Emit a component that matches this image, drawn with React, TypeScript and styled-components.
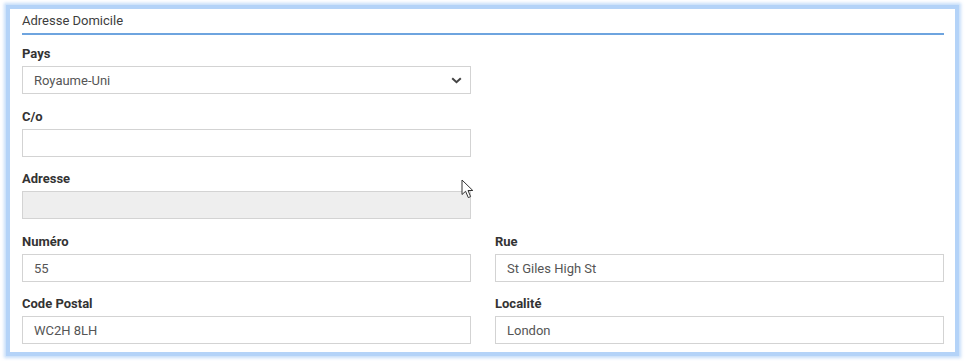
import styled, { createGlobalStyle } from 'styled-components';

const GlobalStyle = createGlobalStyle`
  html, body {
    margin: 0;
    padding: 0;
    background: #ffffff;
    font-family: Roboto, "Liberation Sans", Arial, sans-serif;
  }
`;

const Page = styled.div`
  position: relative;
  width: 967px;
  height: 361px;
  padding: 9px 0 0 10px;
  box-sizing: border-box;
`;

// white card with the light blue glowing frame
const Card = styled.section`
  width: 945px;
  height: 343px;
  box-sizing: border-box;
  background: #ffffff;
  padding: 3px 11px 0 12px;
  box-shadow:
    0 0 0 4px #b4d3f8,
    0 0 3px 6px rgba(172, 206, 246, 0.7);
`;

const Legend = styled.div`
  font-size: 13px;
  line-height: 18px;
  color: #3d3d3d;
  padding-bottom: 3px;
  border-bottom: 2px solid #6ea4df;
  margin-bottom: 11px;
`;

const Fields = styled.div`
  display: grid;
  grid-template-columns: 1fr 1fr;
  column-gap: 24px;
  row-gap: 14.5px;
`;

// full rows hold a single half-width field (Pays, C/o, Adresse)
const Field = styled.div<{ $full?: boolean }>`
  display: flex;
  flex-direction: column;
  gap: 4px;
  grid-column: ${p => (p.$full ? '1 / -1' : 'auto')};
  width: ${p => (p.$full ? 'calc(50% - 12px)' : 'auto')};
`;

const Label = styled.label`
  font-size: 13px;
  font-weight: 700;
  line-height: 16px;
  color: #333333;
`;

const Box = styled.div<{ $disabled?: boolean }>`
  position: relative;
  height: 28px;
  box-sizing: border-box;
  border: 1px solid #d3d3d3;
  background: ${p => (p.$disabled ? '#eeeeee' : '#ffffff')};
  padding: 1px 10px 0 11px;
  display: flex;
  align-items: center;
  font-size: 13px;
  color: #555555;
`;

const Chevron = styled.svg`
  position: absolute;
  right: 8px;
  top: 50%;
  margin-top: -3px;
`;

const Cursor = styled.svg`
  position: absolute;
  left: 461px;
  top: 179px;
`;

type FieldProps = {
  label: string;
  value?: string;
  full?: boolean;
  disabled?: boolean;
  select?: boolean;
};

const FormField = ({ label, value = '', full, disabled, select }: FieldProps) => (
  <Field $full={full}>
    <Label>{label}</Label>
    <Box $disabled={disabled}>
      {value}
      {select && (
        <Chevron width="11" height="7" viewBox="0 0 11 7">
          <path d="M1.2 1.2 L5.5 5.2 L9.8 1.2" fill="none" stroke="#444" strokeWidth="2" />
        </Chevron>
      )}
    </Box>
  </Field>
);

export default function App() {
  return (
    <>
      <GlobalStyle />
      <Page>
        <Card>
          <Legend>Adresse Domicile</Legend>
          <Fields>
            <FormField label="Pays" value="Royaume-Uni" select full />
            <FormField label="C/o" full />
            <FormField label="Adresse" disabled full />
            <FormField label="Numéro" value="55" />
            <FormField label="Rue" value="St Giles High St" />
            <FormField label="Code Postal" value="WC2H 8LH" />
            <FormField label="Localité" value="London" />
          </Fields>
        </Card>
        {/* mouse pointer captured in the screenshot */}
        <Cursor width="13" height="20" viewBox="0 0 13 20">
          <path
            d="M1 1 L1 15.5 L4.6 12.3 L7.3 18.6 L9.6 17.6 L7 11.5 L11.8 11.5 Z"
            fill="#ffffff"
            stroke="#333"
            strokeWidth="1"
            strokeLinejoin="round"
          />
        </Cursor>
      </Page>
    </>
  );
}
